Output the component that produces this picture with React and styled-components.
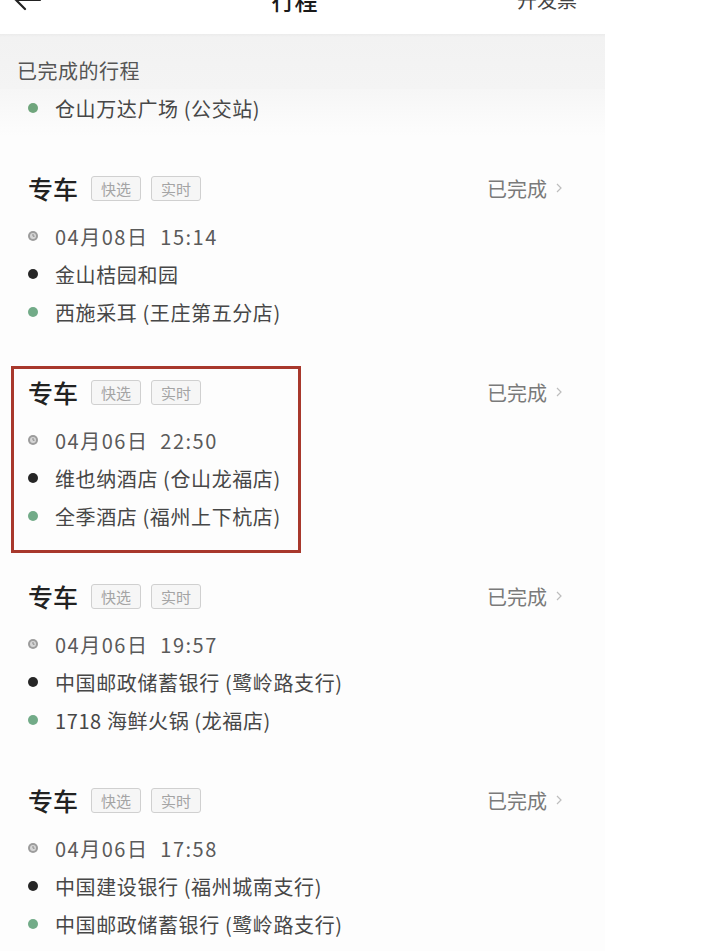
import React from 'react';
import styled, { createGlobalStyle, css } from 'styled-components';

const GlobalStyle = createGlobalStyle`
  html, body {
    margin: 0;
    padding: 0;
    background: #fff;
  }
  body {
    font-family: "Noto Sans CJK SC", "Noto Sans", sans-serif;
    -webkit-font-smoothing: antialiased;
  }
`;

const Page = styled.div`
  width: 722px;
  height: 951px;
  overflow: hidden;
  background: #fff;
`;

const Column = styled.div`
  width: 605px;
  background: #fdfdfd;
  min-height: 951px;
`;

const Header = styled.header`
  height: 34px;
  box-sizing: border-box;
  padding: 0 28px 22px 12px;
  display: flex;
  align-items: flex-end;
  justify-content: space-between;
  background: #fff;
`;

const Back = styled.div`
  width: 100px;
  height: 24px;
  display: flex;
  align-items: center;
`;

const Title = styled.h1`
  margin: 0;
  font-size: 23px;
  line-height: 24px;
  font-weight: 500;
  color: #1a1a1a;
`;

const Invoice = styled.div`
  width: 100px;
  text-align: right;
  font-size: 20px;
  line-height: 24px;
  color: #444;
`;

const Section = styled.div`
  height: 55px;
  box-sizing: border-box;
  padding: 18px 0 0 17px;
  font-size: 20px;
  letter-spacing: 0.5px;
  line-height: 37px;
  color: #555;
  background: linear-gradient(to bottom, #ebebeb 0, #f2f2f2 3px, #f4f4f4 100%);
`;

const Stub = styled.div`
  padding-bottom: 41px;
  background: linear-gradient(to bottom, #f6f6f6, #fdfdfd 60%);
`;

const Card = styled.div`
  position: relative;
  padding-bottom: 41px;
  ${p => p.$marked && css`
    &::after {
      content: '';
      position: absolute;
      top: -6px;
      left: 11px;
      width: 290px;
      bottom: 23px;
      box-sizing: border-box;
      border: 3px solid #a8382c;
      pointer-events: none;
    }
  `}
`;

const CardHead = styled.div`
  height: 40px;
  margin-bottom: 9px;
  padding: 0 43px 0 28px;
  display: flex;
  align-items: center;
`;

const CarType = styled.div`
  font-size: 25px;
  line-height: 40px;
  font-weight: 500;
  color: #222;
  margin-right: 13px;
`;

const Tag = styled.span`
  display: inline-flex;
  align-items: center;
  justify-content: center;
  width: 50px;
  height: 25px;
  box-sizing: border-box;
  margin-right: 10px;
  border: 1px solid #d0d0d0;
  border-radius: 3px;
  background: #f6f6f6;
  font-size: 15px;
  color: #a4a4a4;
`;

const Status = styled.div`
  margin-left: auto;
  display: flex;
  align-items: center;
  gap: 9px;
  font-size: 20px;
  color: #7a7a7a;
`;

const Row = styled.div`
  height: 38px;
  padding-left: 28px;
  display: flex;
  align-items: center;
  gap: 17px;
  font-size: 20px;
  letter-spacing: ${p => (p.$time ? '1.5px' : '0.6px')};
  color: ${p => (p.$time ? '#5a5a5a' : '#474747')};
  white-space: pre;
`;

const Dot = styled.span`
  width: 10px;
  height: 10px;
  border-radius: 50%;
  flex: none;
  background: ${p => p.$color};
`;

const Clock = () => (
  <svg width="10" height="10" viewBox="0 0 10 10" style={{ flex: 'none' }}>
    <circle cx="5" cy="5" r="5" fill="#9c9c9c" />
    <circle cx="5" cy="5" r="3" fill="#d6d6d6" />
    <path d="M5 3v2.2h1.6" stroke="#8a8a8a" strokeWidth="1" fill="none" />
  </svg>
);

const Chevron = () => (
  <svg width="6" height="10" viewBox="0 0 6 10">
    <path d="M1 1l4 4-4 4" stroke="#bdbdbd" strokeWidth="1.2" fill="none" />
  </svg>
);

const ArrowLeft = () => (
  <svg width="30" height="24" viewBox="0 0 30 24">
    <path d="M28 12H4M13 3l-9 9 9 9" stroke="#222" strokeWidth="2.2" fill="none" strokeLinecap="round" />
  </svg>
);

const trips = [
  { time: '04月08日  15:14', from: '金山桔园和园', to: '西施采耳 (王庄第五分店)' },
  { time: '04月06日  22:50', from: '维也纳酒店 (仓山龙福店)', to: '全季酒店 (福州上下杭店)', marked: true },
  { time: '04月06日  19:57', from: '中国邮政储蓄银行 (鹭岭路支行)', to: '1718 海鲜火锅 (龙福店)' },
  { time: '04月06日  17:58', from: '中国建设银行 (福州城南支行)', to: '中国邮政储蓄银行 (鹭岭路支行)' },
];

const Trip = ({ trip }) => (
  <Card $marked={trip.marked}>
    <CardHead>
      <CarType>专车</CarType>
      <Tag>快选</Tag>
      <Tag>实时</Tag>
      <Status>
        已完成
        <Chevron />
      </Status>
    </CardHead>
    <Row $time>
      <Clock />
      {trip.time}
    </Row>
    <Row>
      <Dot $color="#262626" />
      {trip.from}
    </Row>
    <Row>
      <Dot $color="#72ab88" />
      {trip.to}
    </Row>
  </Card>
);

export default function App() {
  return (
    <Page>
      <GlobalStyle />
      <Column>
        <Header>
          <Back>
            <ArrowLeft />
          </Back>
          <Title>行程</Title>
          <Invoice>开发票</Invoice>
        </Header>
        <Section>已完成的行程</Section>
        <Stub>
          <Row>
            <Dot $color="#6fa57c" />
            仓山万达广场 (公交站)
          </Row>
        </Stub>
        {trips.map((t, i) => (
          <Trip key={i} trip={t} />
        ))}
      </Column>
    </Page>
  );
}
